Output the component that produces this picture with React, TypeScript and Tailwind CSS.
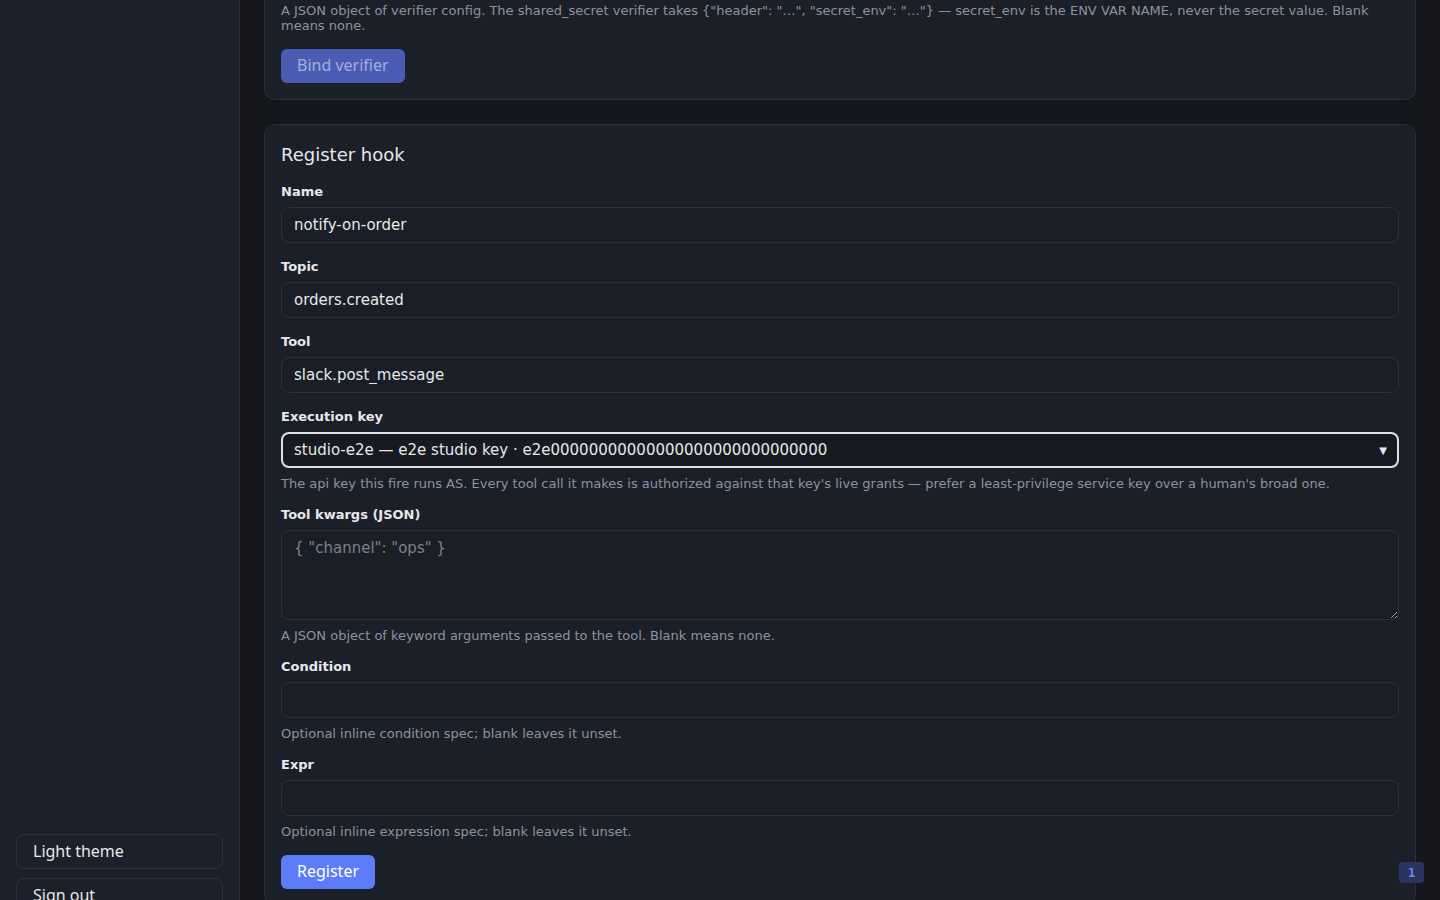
import React from 'react';

const hint = 'text-[13px] leading-4 text-[#8b93a1] mt-[8px] -mb-px';
const label = 'block pt-px text-[13px] leading-5 font-bold text-[#e6e8ec] mb-[5px]';
const input =
    'w-full h-9 px-3 rounded-lg border border-[#2c313c] bg-[#1a1e26] text-[15px] text-[#e6e8ec] outline-none placeholder:text-[#7b828e]';

const Field = ({ name, value, note }: { name: string; value?: string; note?: string }) => (
    <div className="mb-[13px]">
        <label className={label}>{name}</label>
        <input className={input} defaultValue={value} />
        {note && <p className={hint}>{note}</p>}
    </div>
);

const App = () => {
    return (
        <div className="flex h-screen overflow-hidden bg-[#15171c] font-['DejaVu_Sans',sans-serif]">
            {/* Sidebar */}
            <aside className="w-[240px] shrink-0 overflow-hidden border-r border-[#2a2f3a] bg-[#1b202a] px-4 pt-[834px]">
                <div className="flex flex-col gap-[9px] font-['Noto_Sans',sans-serif]">
                    <button className="h-[35px] w-full rounded-lg border border-[#2c313b] px-4 pb-[2px] text-left text-base text-[#e5e7eb]">
                        Light theme
                    </button>
                    <button className="h-[35px] w-full rounded-lg border border-[#2c313b] px-4 pb-[2px] text-left text-base text-[#e5e7eb]">
                        Sign out
                    </button>
                </div>
            </aside>

            {/* Main */}
            <main className="flex-1 overflow-hidden px-6">
                {/* Verifier card (scrolled past its top) */}
                <section className="rounded-b-xl border-x border-b border-[#2b303a] bg-[#1b1f28] px-4 pt-[3px] pb-4">
                    <p className="text-[13px] leading-[15px] text-[#8b93a1]">
                        A JSON object of verifier config. The shared_secret verifier takes {'{"header": "…", "secret_env": "…"}'} — secret_env is the ENV VAR NAME, never the secret value. Blank means none.
                    </p>
                    <button className="mt-4 h-[34px] rounded-md bg-[#4b5cb4] px-4 pb-[2px] font-['Noto_Sans',sans-serif] text-base text-[#a3aedb]">
                        Bind verifier
                    </button>
                </section>

                {/* Register hook */}
                <section className="mt-6 rounded-xl border border-[#2b303a] bg-[#1b1f28] px-4 pt-4 pb-4">
                    <h2 className="mb-[13px] text-lg leading-[27px] text-[#e6e8ec]">Register hook</h2>

                    <Field name="Name" value="notify-on-order" />
                    <Field name="Topic" value="orders.created" />
                    <Field name="Tool" value="slack.post_message" />

                    <div className="mb-[13px]">
                        <label className={label}>Execution key</label>
                        <div className="relative">
                            <select className="h-9 w-full appearance-none rounded-lg border-2 border-[#dfe2e8] bg-[#171a21] px-[11px] text-[15px] text-[#e6e8ec] outline-none">
                                <option>studio-e2e — e2e studio key · e2e00000000000000000000000000000</option>
                            </select>
                            <span className="pointer-events-none absolute right-3 top-1/2 -translate-y-1/2 text-[10px] text-[#e6e8ec]">▼</span>
                        </div>
                        <p className={hint}>
                            The api key this fire runs AS. Every tool call it makes is authorized against that key's live grants — prefer a least-privilege service key over a human's broad one.
                        </p>
                    </div>

                    <div className="mb-[13px]">
                        <label className={label}>Tool kwargs (JSON)</label>
                        <textarea
                            className="block h-[90px] w-full rounded-lg border border-[#2c313c] bg-[#1a1e26] px-3 py-[6px] text-[15px] text-[#e6e8ec] outline-none placeholder:text-[#7b828e]"
                            placeholder={'{ "channel": "ops" }'}
                        />
                        <p className={hint}>A JSON object of keyword arguments passed to the tool. Blank means none.</p>
                    </div>

                    <Field name="Condition" note="Optional inline condition spec; blank leaves it unset." />
                    <Field name="Expr" note="Optional inline expression spec; blank leaves it unset." />

                    <button className="mt-[3px] h-[34px] rounded-md bg-[#5c7cfa] px-4 pb-[2px] font-['Noto_Sans',sans-serif] text-base text-white">
                        Register
                    </button>
                </section>
            </main>

            <div className="fixed right-4 bottom-[17px] flex h-[21px] w-[25px] items-center justify-center rounded bg-[#2b3460] font-['DejaVu_Sans_Mono',monospace] text-xs font-bold text-[#7083f5]">
                1
            </div>
        </div>
    );
};

export default App;
